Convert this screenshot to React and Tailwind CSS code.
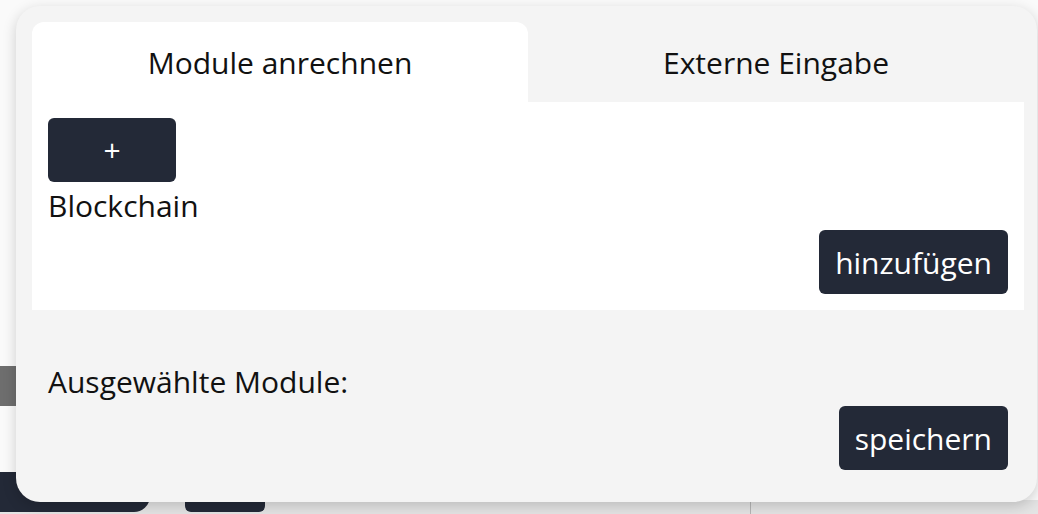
import React, { useState } from 'react';

export default function App() {
  const [tab, setTab] = useState('module');

  return (
    <div className="relative w-full h-[514px] overflow-hidden bg-[#fafafa]" style={{ fontFamily: '"Open Sans", "Noto Sans", sans-serif' }}>
      {/* Seite hinter dem Dialog */}
      <div className="absolute left-0 right-0 top-[500px] h-[14px] bg-[#e4e4e4]" />
      <div className="absolute left-0 top-[366px] w-[16px] h-[40px] bg-[#6e6e6e]" />
      <div className="absolute left-0 top-[472px] w-[150px] h-[40px] rounded-br-2xl bg-[#232937]" />
      <div className="absolute left-[185px] top-[472px] w-[80px] h-[40px] rounded-b-md bg-[#232937]" />
      <div className="absolute left-[750px] top-[472px] w-[1px] h-[42px] bg-[#b5b5b5]" />

      {/* Dialog */}
      <div className="absolute left-[16px] top-[6px] w-[1021px] h-[496px] rounded-3xl bg-[#f4f4f4] shadow-[0_4px_14px_rgba(0,0,0,0.18)] pt-4 pl-4 pr-[13px] text-[#111]">
        <div className="flex h-[80px]">
          <button
            onClick={() => setTab('module')}
            className={`w-[496px] rounded-t-xl text-[30px] ${tab === 'module' ? 'bg-white' : ''}`}
          >
            Module anrechnen
          </button>
          <button
            onClick={() => setTab('extern')}
            className={`w-[496px] rounded-t-xl text-[30px] ${tab === 'extern' ? 'bg-white' : ''}`}
          >
            Externe Eingabe
          </button>
        </div>

        <div className="bg-white h-[208px] p-4 flex flex-col">
          <button className="w-[128px] h-[64px] rounded-md bg-[#232937] text-white text-[30px] leading-none">+</button>
          <div className="text-[30px] leading-[40px] mt-[4px]">Blockchain</div>
          <div className="mt-auto flex justify-end">
            <button className="h-[64px] px-4 rounded-md bg-[#232937] text-white text-[30px]">hinzufügen</button>
          </div>
        </div>

        <div className="px-4 pt-[52px] flex flex-col">
          <div className="text-[30px] leading-[40px]">Ausgewählte Module:</div>
          <div className="flex justify-end mt-[4px]">
            <button className="h-[64px] px-4 rounded-md bg-[#232937] text-white text-[30px]">speichern</button>
          </div>
        </div>
      </div>
    </div>
  );
}
